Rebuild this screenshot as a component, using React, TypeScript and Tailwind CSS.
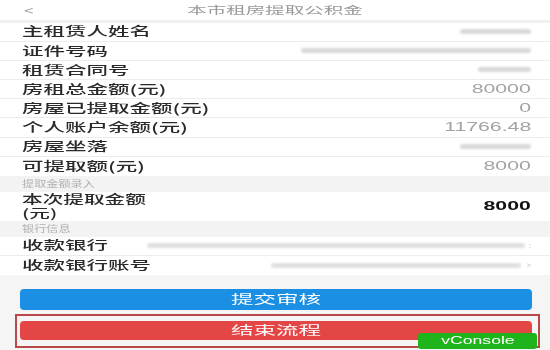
import React from 'react';

const font = { fontFamily: '"Noto Sans CJK SC", "Noto Sans", sans-serif' };

function Bar({ w, className = '' }: { w: string; className?: string }) {
  return <div className={`h-[5px] rounded-full bg-[#d9d9d9] blur-[1px] ${w} ${className}`} />;
}

function Row({ label, children, last }: { label: string; children?: React.ReactNode; last?: boolean }) {
  return (
    <div className={`flex h-[19.2px] items-center justify-between bg-white pl-[22px] pr-[19px] ${last ? '' : 'border-b border-[#ececec]'}`}>
      <span className="inline-block origin-left scale-x-[1.72] text-[12.5px] leading-none font-medium text-[#2a2a2a]">{label}</span>
      {children}
    </div>
  );
}

function Val({ v, dark }: { v: string; dark?: boolean }) {
  return (
    <span
      className={`inline-block origin-right scale-x-[1.7] text-[12.5px] leading-none ${dark ? 'font-bold text-[#111]' : 'text-[#a3a3a3]'}`}
      style={{ fontFamily: '"Liberation Sans", sans-serif' }}
    >
      {v}
    </span>
  );
}

function Section({ title }: { title: string }) {
  return (
    <div className="flex h-[15.6px] items-center bg-[#f3f3f3] pl-[22px]">
      <span className="inline-block origin-left scale-x-[1.35] text-[9px] leading-none text-[#b0b0b0]">{title}</span>
    </div>
  );
}

export default function App() {
  return (
    <div className="h-[350px] w-[550px] overflow-hidden bg-[#f5f5f5]" style={font}>
      {/* header */}
      <div className="flex h-[20px] items-center bg-white pl-[26px]">
        <span className="inline-block w-[10px] scale-x-[1.4] text-[12px] leading-none text-[#a0a0a0]">&lt;</span>
        <div className="flex flex-1 justify-center pr-[36px]">
          <span className="inline-block scale-x-[1.95] text-[10px] leading-none text-[#999]">本市租房提取公积金</span>
        </div>
      </div>
      <div className="h-[2.5px] bg-[#f0f0f0]" />

      <Row label="主租赁人姓名"><Bar w="w-[71px]" /></Row>
      <Row label="证件号码"><Bar w="w-[230px]" className="h-[4px]" /></Row>
      <Row label="租赁合同号"><Bar w="w-[53px]" /></Row>
      <Row label="房租总金额(元)"><Val v="80000" /></Row>
      <Row label="房屋已提取金额(元)"><Val v="0" /></Row>
      <Row label="个人账户余额(元)"><Val v="11766.48" /></Row>
      <Row label="房屋坐落"><Bar w="w-[71px]" /></Row>
      <Row label="可提取额(元)" last><Val v="8000" /></Row>

      <Section title="提取金额录入" />
      <div className="flex h-[29.4px] items-center justify-between bg-white pl-[22px] pr-[19px]">
        <div className="flex flex-col">
          <span className="inline-block origin-left scale-x-[1.72] text-[12px] leading-[14px] font-medium text-[#2a2a2a]">本次提取金额</span>
          <span className="inline-block origin-left scale-x-[1.72] text-[12px] leading-[14px] font-medium text-[#2a2a2a]">(元)</span>
        </div>
        <Val v="8000" dark />
      </div>

      <Section title="银行信息" />
      <Row label="收款银行">
        <div className="flex items-center gap-[4px]">
          <Bar w="w-[378px]" className="h-[4px] bg-[#e0e0e0]" />
          <span className="text-[7px] leading-none text-[#c4c4c4]">:</span>
        </div>
      </Row>
      <Row label="收款银行账号" last>
        <div className="flex items-center gap-[6px]">
          <Bar w="w-[250px]" className="h-[4px] bg-[#e0e0e0]" />
          <span className="text-[8px] leading-none text-[#c0c0c0]">&gt;</span>
        </div>
      </Row>

      {/* buttons */}
      <div className="flex flex-col px-[20px] pt-[14px]">
        <div className="flex h-[21px] w-[512px] items-center justify-center rounded-[4px] bg-[#1a8fe3]">
          <span className="inline-block scale-x-[1.8] text-[12.5px] leading-none text-white">提交审核</span>
        </div>
        <div className="relative -ml-[5px] mt-[4px] h-[34px] w-[525px] border-2 border-[#b94848] px-[3px] pt-[5px]">
          <div className="flex h-[19.5px] w-[512px] items-center justify-center rounded-[4px] bg-[#e44646]">
            <span className="inline-block scale-x-[1.8] text-[12.5px] leading-none text-white">结束流程</span>
          </div>
          <div className="absolute left-[401px] top-[17px] flex h-[16px] w-[119px] items-center justify-center rounded-[3px] bg-[#1fb41c]">
            <span
              className="inline-block scale-x-[1.6] text-[11px] leading-none text-white"
              style={{ fontFamily: '"Liberation Sans", sans-serif' }}
            >
              vConsole
            </span>
          </div>
        </div>
      </div>
    </div>
  );
}
